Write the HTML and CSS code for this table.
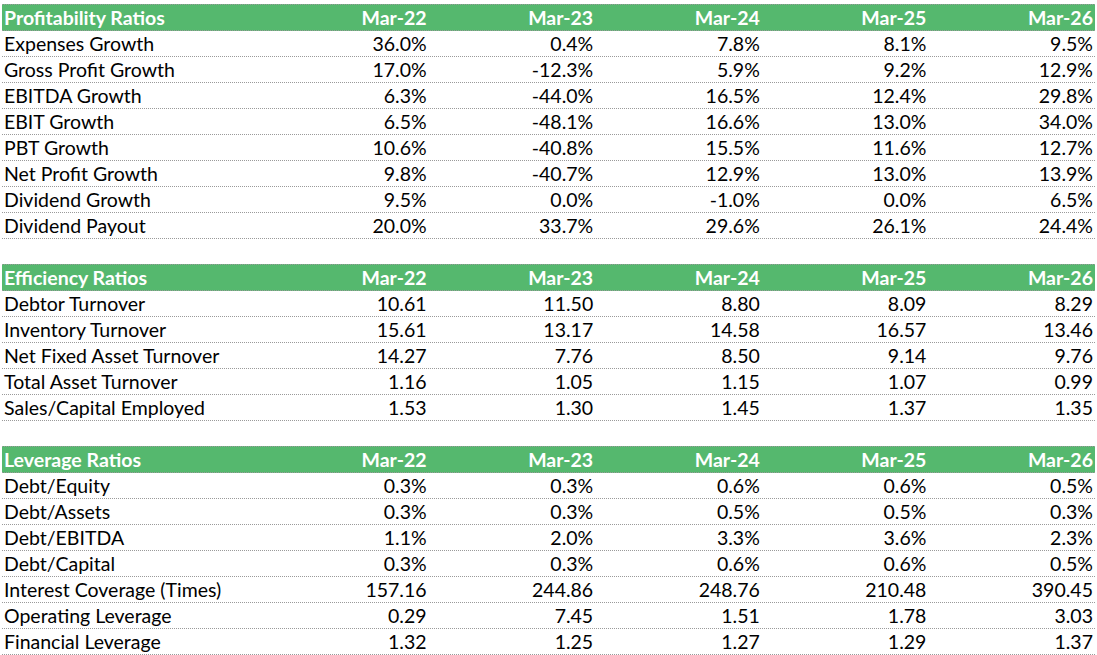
FILE: index.html
```html
<!DOCTYPE html>
<html>
<head>
<meta charset="utf-8">
<link rel="stylesheet" href="styles.css">
</head>
<body>
<div class="sheet">
  <div class="row head"><div class="lbl">Profitability Ratios</div><div>Mar-22</div><div>Mar-23</div><div>Mar-24</div><div>Mar-25</div><div>Mar-26</div></div>
  <div class="row"><div class="lbl">Expenses Growth</div><div>36.0%</div><div>0.4%</div><div>7.8%</div><div>8.1%</div><div>9.5%</div></div>
  <div class="row"><div class="lbl">Gross Profit Growth</div><div>17.0%</div><div>-12.3%</div><div>5.9%</div><div>9.2%</div><div>12.9%</div></div>
  <div class="row"><div class="lbl">EBITDA Growth</div><div>6.3%</div><div>-44.0%</div><div>16.5%</div><div>12.4%</div><div>29.8%</div></div>
  <div class="row"><div class="lbl">EBIT Growth</div><div>6.5%</div><div>-48.1%</div><div>16.6%</div><div>13.0%</div><div>34.0%</div></div>
  <div class="row"><div class="lbl">PBT Growth</div><div>10.6%</div><div>-40.8%</div><div>15.5%</div><div>11.6%</div><div>12.7%</div></div>
  <div class="row"><div class="lbl">Net Profit Growth</div><div>9.8%</div><div>-40.7%</div><div>12.9%</div><div>13.0%</div><div>13.9%</div></div>
  <div class="row"><div class="lbl">Dividend Growth</div><div>9.5%</div><div>0.0%</div><div>-1.0%</div><div>0.0%</div><div>6.5%</div></div>
  <div class="row"><div class="lbl">Dividend Payout</div><div>20.0%</div><div>33.7%</div><div>29.6%</div><div>26.1%</div><div>24.4%</div></div>
  <div class="row blank"></div>
  <div class="row head"><div class="lbl">Efficiency Ratios</div><div>Mar-22</div><div>Mar-23</div><div>Mar-24</div><div>Mar-25</div><div>Mar-26</div></div>
  <div class="row"><div class="lbl">Debtor Turnover</div><div>10.61</div><div>11.50</div><div>8.80</div><div>8.09</div><div>8.29</div></div>
  <div class="row"><div class="lbl">Inventory Turnover</div><div>15.61</div><div>13.17</div><div>14.58</div><div>16.57</div><div>13.46</div></div>
  <div class="row"><div class="lbl">Net Fixed Asset Turnover</div><div>14.27</div><div>7.76</div><div>8.50</div><div>9.14</div><div>9.76</div></div>
  <div class="row"><div class="lbl">Total Asset Turnover</div><div>1.16</div><div>1.05</div><div>1.15</div><div>1.07</div><div>0.99</div></div>
  <div class="row"><div class="lbl">Sales/Capital Employed</div><div>1.53</div><div>1.30</div><div>1.45</div><div>1.37</div><div>1.35</div></div>
  <div class="row blank"></div>
  <div class="row head"><div class="lbl">Leverage Ratios</div><div>Mar-22</div><div>Mar-23</div><div>Mar-24</div><div>Mar-25</div><div>Mar-26</div></div>
  <div class="row"><div class="lbl">Debt/Equity</div><div>0.3%</div><div>0.3%</div><div>0.6%</div><div>0.6%</div><div>0.5%</div></div>
  <div class="row"><div class="lbl">Debt/Assets</div><div>0.3%</div><div>0.3%</div><div>0.5%</div><div>0.5%</div><div>0.3%</div></div>
  <div class="row"><div class="lbl">Debt/EBITDA</div><div>1.1%</div><div>2.0%</div><div>3.3%</div><div>3.6%</div><div>2.3%</div></div>
  <div class="row"><div class="lbl">Debt/Capital</div><div>0.3%</div><div>0.3%</div><div>0.6%</div><div>0.6%</div><div>0.5%</div></div>
  <div class="row"><div class="lbl">Interest Coverage (Times)</div><div>157.16</div><div>244.86</div><div>248.76</div><div>210.48</div><div>390.45</div></div>
  <div class="row"><div class="lbl">Operating Leverage</div><div>0.29</div><div>7.45</div><div>1.51</div><div>1.78</div><div>3.03</div></div>
  <div class="row"><div class="lbl">Financial Leverage</div><div>1.32</div><div>1.25</div><div>1.27</div><div>1.29</div><div>1.37</div></div>
</div>
</body>
</html>
```
FILE: styles.css
```css
html, body {
  margin: 0;
  padding: 0;
  background: #ffffff;
}
.sheet {
  padding: 5px 0 0 2px;
  width: 1093px;
  font-family: Lato, "Open Sans", sans-serif;
  font-size: 19.5px;
  color: #000000;
}
.row {
  display: grid;
  grid-template-columns: 260px repeat(5, 166.6px);
  height: 25px;
  border-bottom: 1px dotted #9a9a9a;
  line-height: 25px;
  white-space: nowrap;
}
.row > div {
  text-align: right;
  padding-right: 2px;
}
.row > .lbl {
  text-align: left;
  padding-left: 2px;
  padding-right: 0;
}
.row.head {
  background: #55b86e;
  color: #ffffff;
  font-weight: bold;
  border-top: 1px dotted #9a9a9a;
  margin-top: -1px;
}
.row.blank {
  border-bottom: none;
  height: 26px;
}
```
